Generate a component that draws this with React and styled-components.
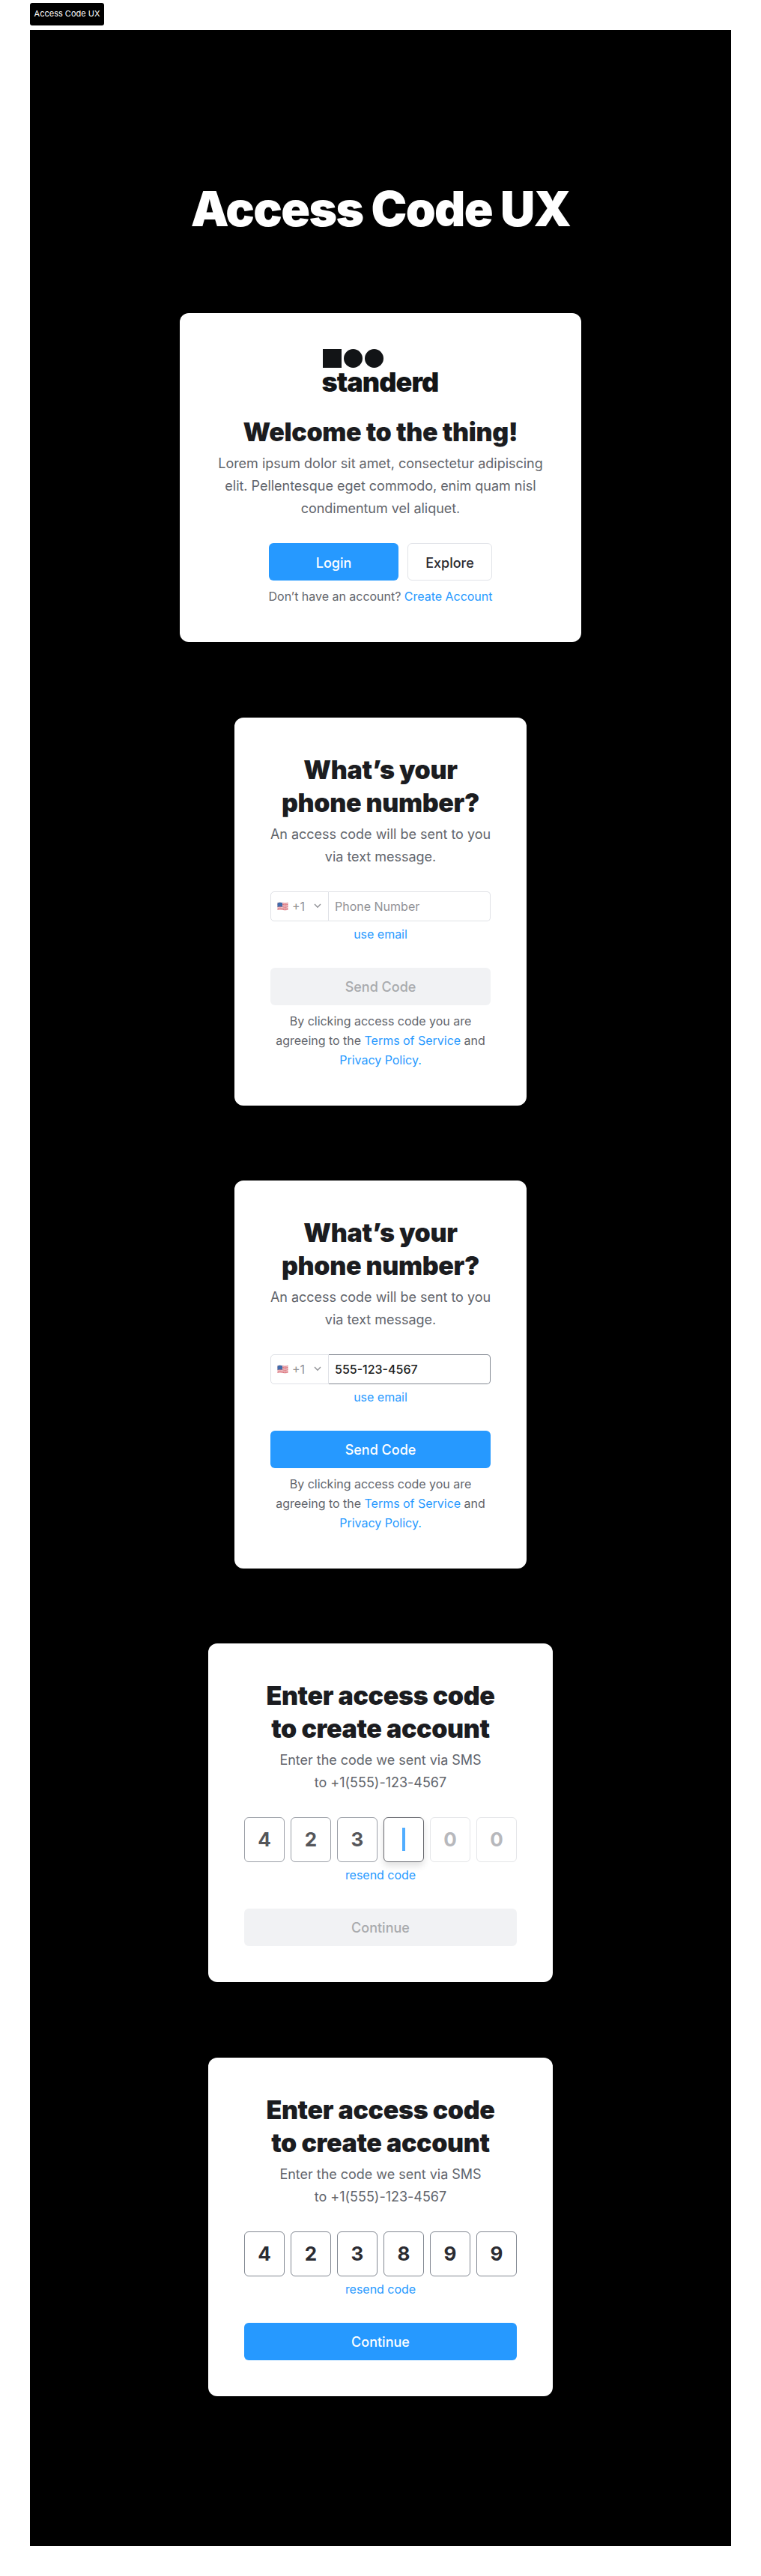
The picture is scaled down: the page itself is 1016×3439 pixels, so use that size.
import React from 'react';
import styled, { createGlobalStyle, css } from 'styled-components';

const blue = '#2699ff';

const Global = createGlobalStyle`
  * { box-sizing: border-box; }
  body {
    margin: 0;
    background: #fff;
    font-family: Inter, "Liberation Sans", sans-serif;
  }
  h1, h2, p { margin: 0; }
  button, input { font-family: inherit; margin: 0; }
`;

const Page = styled.main`
  height: 3439px;
  padding: 4px 40px 40px;
  display: flex;
  flex-direction: column;
  align-items: flex-start;
  gap: 6px;
`;

const Tag = styled.div`
  height: 30px;
  width: 99px;
  border-radius: 3px;
  background: #000;
  color: #fff;
  font-size: 11px;
  line-height: 29px;
  text-align: center;
  white-space: nowrap;
`;

const Board = styled.section`
  align-self: stretch;
  flex: 1;
  background: #000;
  display: flex;
  flex-direction: column;
  align-items: center;
  padding-top: 200px;
`;

const Title = styled.h1`
  color: #fff;
  font-size: 64px;
  line-height: 78px;
  font-weight: 900;
  letter-spacing: -1.65px;
  white-space: nowrap;
  margin-bottom: 100px;
`;

const Card = styled.article`
  width: ${(p) => p.$width}px;
  margin-bottom: ${(p) => p.$after || 100}px;
  padding: 48px;
  border-radius: 12px;
  background: #fff;
  display: flex;
  flex-direction: column;
  align-items: center;
  text-align: center;
`;

const Logo = styled.div`
  height: 57.4px;
  width: 155px;
  margin-bottom: 32px;
  color: #121416;
  text-align: left;
`;

const Marks = styled.div`
  display: flex;
  gap: 3px;
`;

const Mark = styled.span`
  width: 25px;
  height: 25px;
  border-radius: ${(p) => (p.$round ? '50%' : 0)};
  background: currentColor;
`;

const Wordmark = styled.div`
  margin: 1px 0 0 -1px;
  font-size: 36px;
  line-height: 36px;
  font-weight: 900;
  letter-spacing: -0.95px;
  white-space: nowrap;
`;

const Heading = styled.h2`
  color: #1b1c20;
  font-size: 34px;
  line-height: 44px;
  font-weight: 900;
  letter-spacing: -0.36px;
  white-space: nowrap;
`;

const Lead = styled.p`
  margin: 5px 0 -1px;
  color: #62656c;
  font-size: 18px;
  line-height: 30px;
  letter-spacing: -0.02px;
  white-space: nowrap;
`;

const Note = styled.p`
  margin-top: ${(p) => p.$gap}px;
  color: #62656c;
  font-size: 16px;
  line-height: 26px;
  letter-spacing: -0.02px;
  white-space: nowrap;
`;

const Link = styled.a`
  color: ${blue};
`;

const Actions = styled.div`
  align-self: ${(p) => (p.$wide ? 'stretch' : 'center')};
  display: flex;
  gap: 12px;
  margin-top: 32px;
`;

const variants = {
  primary: css`background: ${blue}; color: #fff;`,
  outline: css`background: #fff; color: #2a2b31; border: 1px solid #e1e3e8;`,
  disabled: css`background: #f1f2f4; color: #a8aaad;`,
};

const Button = styled.button`
  flex: ${(p) => (p.$width ? `0 0 ${p.$width}px` : 1)};
  height: 50px;
  padding: 2px 0 0;
  border: 0;
  border-radius: 6px;
  font-size: 18px;
  font-weight: 500;
  ${(p) => variants[p.$variant]}
`;

const Field = styled.div`
  align-self: stretch;
  height: 40px;
  margin-top: 32px;
  display: flex;
`;

const Country = styled.div`
  width: 78px;
  border: 1px solid #dfe1e6;
  border-radius: 5px 0 0 5px;
  display: flex;
  align-items: center;
  padding-left: 8px;
  color: #919296;
  font-size: 16px;
`;

const Code = styled.span`
  width: 29px;
  margin-left: 5px;
  text-align: left;
`;

const PhoneInput = styled.input`
  flex: 1;
  min-width: 0;
  padding: 0 8px;
  border: 1px solid ${(p) => (p.$filled ? '#828892' : '#dfe1e6')};
  border-left: 0;
  border-radius: 0 5px 5px 0;
  outline: 0;
  background: #fff;
  color: #1b1c20;
  font-size: 16px;
  font-weight: ${(p) => (p.$filled ? 500 : 400)};
  &::placeholder { color: #919296; opacity: 1; }
`;

const Cells = styled.div`
  display: flex;
  gap: 8px;
  margin-top: 32px;
`;

const cellStates = {
  partial: css`border-color: #9a9ea6; color: #55565a;`,
  active: css`border-color: #66676d; box-shadow: 0 5px 10px rgba(0, 0, 0, 0.12);`,
  empty: css`border-color: #e4e5e8; color: #b7b8bc;`,
  done: css`border-color: #828892; color: #2a2b31;`,
};

const Cell = styled.div`
  width: 54px;
  height: 60px;
  border: 1px solid;
  border-radius: 6px;
  display: flex;
  align-items: center;
  justify-content: center;
  font-size: 26px;
  font-weight: 700;
  ${(p) => cellStates[p.$state]}
`;

const Caret = styled.i`
  width: 4px;
  height: 31px;
  background: #51adff;
`;

const Flag = () => (
  <svg width="15" height="12" viewBox="0 0 15 12">
    <path d="M.5 1.5C3 .4 5 .9 7.500 1.400S12 1.900 14.500 1.100V10.500C12 11.300 10 11.200 7.500 10.700S3 10 .5 11.100z" fill="#f6e6e8" />
    <g fill="none" stroke="#d5545f" strokeWidth="0.9">
      <path d="M.5 1.900c2.500-1.100 4.500-.6 7-.1s4.500.5 7-.3" />
      <path d="M.5 3.600c2.500-1.100 4.500-.6 7-.1s4.500.5 7-.3" />
      <path d="M.5 5.300c2.500-1.100 4.500-.6 7-.1s4.500.5 7-.3" />
      <path d="M.5 7c2.500-1.100 4.500-.6 7-.1s4.500.5 7-.3" />
      <path d="M.5 8.700c2.500-1.100 4.500-.6 7-.1s4.500.5 7-.3" />
      <path d="M.5 10.500c2.500-1.100 4.500-.6 7-.1s4.500.5 7-.3" />
    </g>
    <path d="M.5 1.500C3 .4 5 .9 7 1.300v5.300c-2-.4-4-.8-6.500.3z" fill="#3f6cab" />
  </svg>
);

const Chevron = () => (
  <svg width="10" height="7" viewBox="0 0 10 7" fill="none" stroke="#919296" strokeWidth="1.4">
    <path d="M1 1l4 4.300L9 1" />
  </svg>
);

const PhoneCard = ({ value }) => (
  <Card $width={390}>
    <Heading>What’s your<br />phone number?</Heading>
    <Lead>An access code will be sent to you<br />via text message.</Lead>
    <Field>
      <Country>
        <Flag />
        <Code>+1</Code>
        <Chevron />
      </Country>
      <PhoneInput placeholder="Phone Number" value={value} $filled={!!value} readOnly />
    </Field>
    <Note $gap={4}><Link>use email</Link></Note>
    <Actions $wide>
      <Button $variant={value ? 'primary' : 'disabled'}>Send Code</Button>
    </Actions>
    <Note $gap={8}>
      By clicking access code you are<br />
      agreeing to the <Link>Terms of Service</Link> and<br />
      <Link>Privacy Policy.</Link>
    </Note>
  </Card>
);

const CodeCard = ({ cells, complete, after }) => (
  <Card $width={460} $after={after}>
    <Heading>Enter access code<br />to create account</Heading>
    <Lead>Enter the code we sent via SMS<br />to +1(555)-123-4567</Lead>
    <Cells>
      {cells.map(([digit, state], i) => (
        <Cell key={i} $state={state}>{state === 'active' ? <Caret /> : digit}</Cell>
      ))}
    </Cells>
    <Note $gap={4}><Link>resend code</Link></Note>
    <Actions $wide>
      <Button $variant={complete ? 'primary' : 'disabled'}>Continue</Button>
    </Actions>
  </Card>
);

const partialCode = [
  ['4', 'partial'], ['2', 'partial'], ['3', 'partial'],
  ['', 'active'], ['0', 'empty'], ['0', 'empty'],
];
const fullCode = [...'423899'].map((d) => [d, 'done']);

export default function App() {
  return (
    <>
      <Global />
      <Page>
        <Tag>Access Code UX</Tag>
        <Board>
          <Title>Access Code UX</Title>
          <Card $width={536} $after={100.6}>
            <Logo>
              <Marks><Mark /><Mark $round /><Mark $round /></Marks>
              <Wordmark>standerd</Wordmark>
            </Logo>
            <Heading>Welcome to the thing!</Heading>
            <Lead>
              Lorem ipsum dolor sit amet, consectetur adipiscing<br />
              elit. Pellentesque eget commodo, enim quam nisl<br />
              condimentum vel aliquet.
            </Lead>
            <Actions>
              <Button $variant="primary" $width={173}>Login</Button>
              <Button $variant="outline" $width={113}>Explore</Button>
            </Actions>
            <Note $gap={8}>Don’t have an account? <Link>Create Account</Link></Note>
          </Card>
          <PhoneCard value="" />
          <PhoneCard value="555-123-4567" />
          <CodeCard cells={partialCode} after={101} />
          <CodeCard cells={fullCode} complete />
        </Board>
      </Page>
    </>
  );
}
